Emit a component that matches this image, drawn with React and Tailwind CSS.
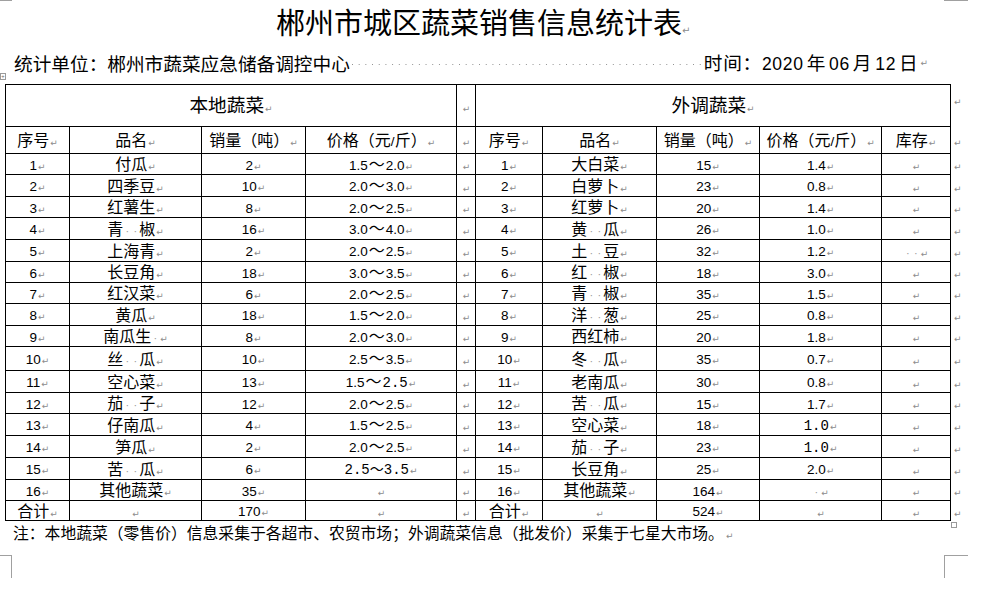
import React from 'react';

const LEFT = [
  ['1', '付瓜', '2', '1.5～2.0'],
  ['2', '四季豆', '10', '2.0～3.0'],
  ['3', '红薯生', '8', '2.0～2.5'],
  ['4', '青··椒', '16', '3.0～4.0'],
  ['5', '上海青', '2', '2.0～2.5'],
  ['6', '长豆角', '18', '3.0～3.5'],
  ['7', '红汉菜', '6', '2.0～2.5'],
  ['8', '黄瓜', '18', '1.5～2.0'],
  ['9', '南瓜生·', '8', '2.0～3.0'],
  ['10', '丝··瓜', '10', '2.5～3.5'],
  ['11', '空心菜', '13', '1.5～[2.5]'],
  ['12', '茄··子', '12', '2.0～2.5'],
  ['13', '仔南瓜', '4', '1.5～2.5'],
  ['14', '笋瓜', '2', '2.0～2.5'],
  ['15', '苦··瓜', '6', '[2.5～3.5]'],
  ['16', '其他蔬菜', '35', ''],
];

const RIGHT = [
  ['1', '大白菜', '15', '1.4', ''],
  ['2', '白萝卜', '23', '0.8', ''],
  ['3', '红萝卜', '20', '1.4', ''],
  ['4', '黄··瓜', '26', '1.0', ''],
  ['5', '土··豆', '32', '1.2', '··'],
  ['6', '红··椒', '18', '3.0', ''],
  ['7', '青··椒', '35', '1.5', ''],
  ['8', '洋··葱', '25', '0.8', ''],
  ['9', '西红柿', '20', '1.8', ''],
  ['10', '冬··瓜', '35', '0.7', ''],
  ['11', '老南瓜', '30', '0.8', ''],
  ['12', '苦··瓜', '15', '1.7', ''],
  ['13', '空心菜', '18', '[1.0]', ''],
  ['14', '茄··子', '23', '[1.0]', ''],
  ['15', '长豆角', '25', '2.0', ''],
  ['16', '其他蔬菜', '164', '·', ''],
];

const ROW_H = ['h-[21px]', 'h-[22px]', 'h-[21px]', 'h-[22px]', 'h-[22px]', 'h-[21px]', 'h-[21px]', 'h-[22px]', 'h-[21px]', 'h-[24px]', 'h-[22px]', 'h-[21px]', 'h-[22px]', 'h-[22px]', 'h-[22px]', 'h-[21px]'];

function Mark() {
  return <span className="ml-[1px] font-['DejaVu_Sans',sans-serif] text-[9px] leading-none text-[#8c8c8c]">↵</span>;
}

function Dot() {
  return <span className="inline-block w-[8px] text-center font-['Liberation_Sans',sans-serif] text-[11px] leading-none text-[#9a9a9a]">·</span>;
}

// split plain text into dots, tildes, ascii runs and cjk runs
function Plain({ s }) {
  const parts = s.match(/·|～|[0-9./]+|[^·～0-9./]+/g) || [];
  return parts.map((p, i) => {
    if (p === '·') return <Dot key={i} />;
    if (p === '～') return <span key={i} className="mx-[1px]">～</span>;
    if (/^[0-9./]+$/.test(p))
      return (
        <span key={i} className="font-['Liberation_Sans','Noto_Sans_CJK_SC',sans-serif] text-[13.5px] leading-none">
          {p}
        </span>
      );
    return <span key={i}>{p}</span>;
  });
}

function Txt({ s }) {
  if (!s) return null;
  const segs = s.split(/(\[[^\]]*\])/).filter(Boolean);
  return segs.map((seg, i) =>
    seg.startsWith('[') ? (
      <span key={i} className="font-['Liberation_Mono','Noto_Sans_CJK_SC',monospace] text-[14px] leading-none">
        {seg.slice(1, -1)}
      </span>
    ) : (
      <Plain key={i} s={seg} />
    )
  );
}

function Cell({ s, className = '', ...rest }) {
  return (
    <td className={`border border-black p-0 text-center align-middle whitespace-nowrap leading-[14px] ${className}`} {...rest}>
      <Txt s={s} />
      <Mark />
    </td>
  );
}

function EndMark({ top }) {
  return (
    <td className={`p-0 pl-[2px] text-left leading-[14px] ${top ? 'align-top pt-[6px]' : 'align-middle'}`}>
      <Mark />
    </td>
  );
}

export default function App() {
  return (
    <div className="relative w-[988px] h-[595px] overflow-hidden bg-white text-black font-['Noto_Sans_CJK_SC',sans-serif]">
      {/* crop marks */}
      <div className="absolute left-0 top-0 w-[12px] h-px bg-[#a0a0a0]" />
      <div className="absolute left-[944px] top-0 w-[24px] h-px bg-[#a0a0a0]" />
      <div className="absolute left-0 top-[555px] w-[12px] h-[23px] border-t border-r border-[#a0a0a0]" />
      <div className="absolute left-[944px] top-[555px] w-[24px] h-[23px] border-t border-l border-[#a0a0a0]" />
      {/* table handles */}
      <div className="absolute left-0 top-[73px] w-[6px] h-[7px] border border-[#9a9a9a] bg-white text-[6px] leading-[5px] text-center text-[#666]">+</div>
      <div className="absolute left-[951px] top-[522px] w-[6px] h-[6px] border border-[#9a9a9a] bg-white" />

      <div className="h-[42px] pl-[276px] leading-[42px] text-[29px] whitespace-nowrap">
        郴州市城区蔬菜销售信息统计表
        <span className="font-['DejaVu_Sans',sans-serif] text-[10px] text-[#8c8c8c]">↵</span>
      </div>

      <div className="flex h-[42px] items-center pl-[14px] text-[18.67px] leading-[42px] whitespace-nowrap">
        <span>统计单位：郴州市蔬菜应急储备调控中心</span>
        <span className="mx-[2px] mt-[3px] h-px flex-1 bg-[linear-gradient(90deg,#8f8f8f_1px,transparent_1px)] bg-[length:6.7px_1px] bg-repeat-x" />
        <span className="tracking-[0.7px]">
          时间：<span className="font-['Liberation_Sans',sans-serif] text-[17.5px]">2020</span>
          <span className="mx-[3px]">年</span>
          <span className="font-['Liberation_Sans',sans-serif] text-[17.5px]">06</span>
          <span className="mx-[3px]">月</span>
          <span className="font-['Liberation_Sans',sans-serif] text-[17.5px]">12</span>
          <span className="ml-[3px]">日</span>
        </span>
        <span className="ml-[2px] mr-[60px] font-['DejaVu_Sans',sans-serif] text-[9px] text-[#8c8c8c]">↵</span>
      </div>

      <table className="ml-[5px] table-fixed border-collapse w-[959px] text-[16px]">
        <colgroup>
          <col className="w-[64px]" />
          <col className="w-[132px]" />
          <col className="w-[104px]" />
          <col className="w-[151px]" />
          <col className="w-[19px]" />
          <col className="w-[67px]" />
          <col className="w-[114px]" />
          <col className="w-[103px]" />
          <col className="w-[122px]" />
          <col className="w-[69px]" />
          <col className="w-[14px]" />
        </colgroup>
        <tbody>
          <tr className="h-[42px]">
            <Cell s="本地蔬菜" colSpan={4} className="text-[18.67px]" />
            <Cell s="" />
            <Cell s="外调蔬菜" colSpan={5} className="text-[18.67px]" />
            <EndMark top />
          </tr>
          <tr className="h-[27px]">
            <Cell s="序号" />
            <Cell s="品名" />
            <Cell s="销量（吨）" />
            <Cell s="价格（元/斤）" />
            <Cell s="" />
            <Cell s="序号" />
            <Cell s="品名" />
            <Cell s="销量（吨）" />
            <Cell s="价格（元/斤）" />
            <Cell s="库存" />
            <EndMark />
          </tr>
          {LEFT.map((l, i) => {
            const r = RIGHT[i];
            return (
              <tr key={i} className={ROW_H[i]}>
                <Cell s={l[0]} />
                <Cell s={l[1]} />
                <Cell s={l[2]} />
                <Cell s={l[3]} />
                <Cell s="" />
                <Cell s={r[0]} />
                <Cell s={r[1]} />
                <Cell s={r[2]} />
                <Cell s={r[3]} />
                <Cell s={r[4]} />
                <EndMark />
              </tr>
            );
          })}
          <tr className="h-[20px]">
            <Cell s="合计" />
            <Cell s="" />
            <Cell s="170" />
            <Cell s="" />
            <Cell s="" />
            <Cell s="合计" />
            <Cell s="" />
            <Cell s="524" />
            <Cell s="" />
            <Cell s="" />
            <EndMark />
          </tr>
        </tbody>
      </table>

      <div className="pl-[13px] text-[15.8px] leading-[23px] whitespace-nowrap">
        注：本地蔬菜（零售价）信息采集于各超市、农贸市场；外调蔬菜信息（批发价）采集于七星大市场。
        <span className="ml-[2px] font-['DejaVu_Sans',sans-serif] text-[9px] text-[#8c8c8c]">↵</span>
      </div>
    </div>
  );
}
